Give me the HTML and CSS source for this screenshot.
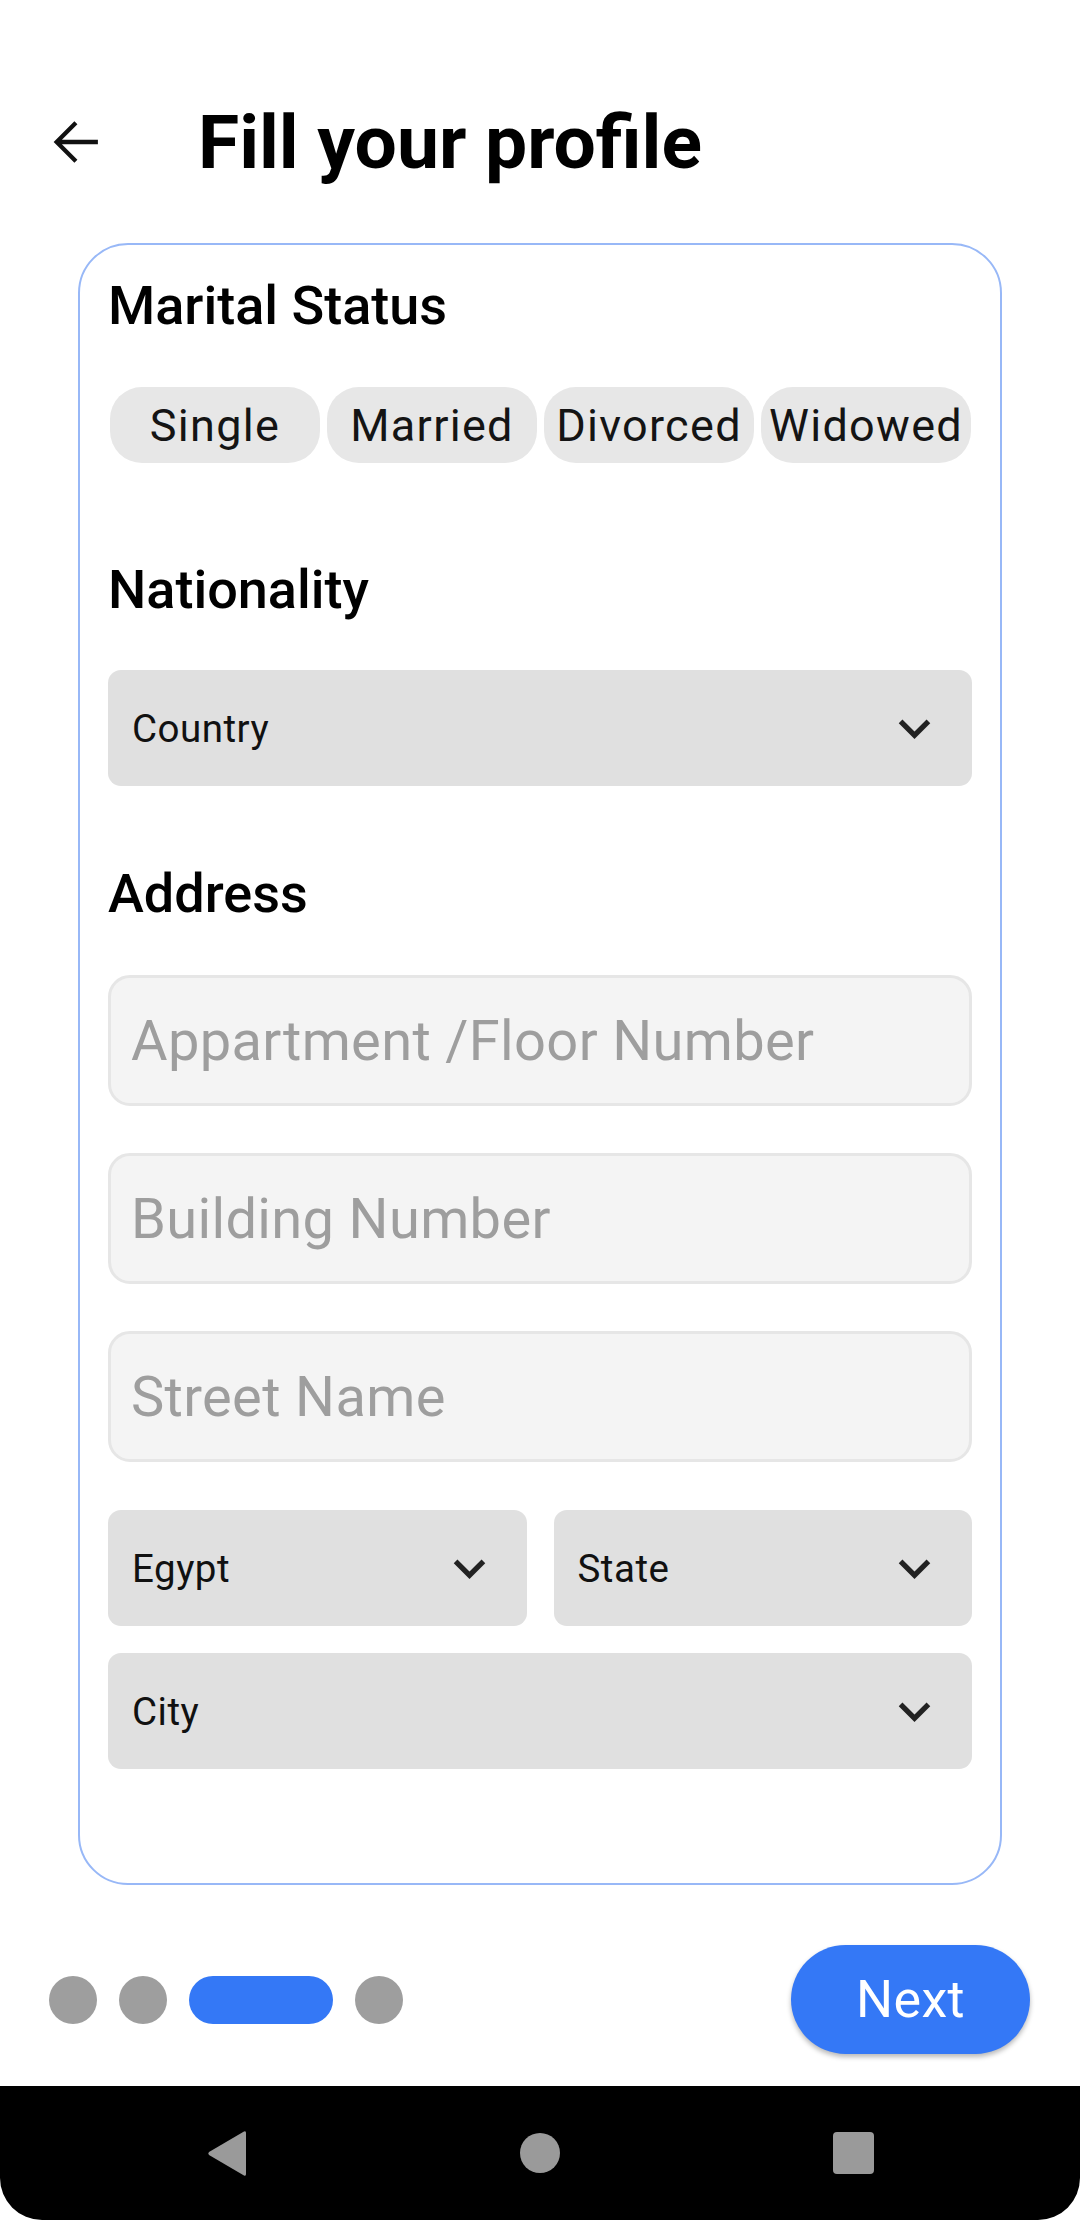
FILE: index.html
```html
<!DOCTYPE html>
<html lang="en">
<head>
<meta charset="utf-8">
<title>Fill your profile</title>
<link rel="stylesheet" href="styles.css">
</head>
<body>
<div class="screen">
  <header class="topbar">
    <span class="back" aria-label="Back">
      <svg viewBox="0 0 24 24" width="66" height="66"><path d="M19.6 12H4.6M11.6 5l-7 7 7 7" fill="none" stroke="#111" stroke-width="1.55" stroke-linecap="butt" stroke-linejoin="miter"/></svg>
    </span>
    <h1 class="title">Fill your profile</h1>
  </header>

  <main class="card">
    <h2 class="section-title">Marital Status</h2>
    <div class="chips">
      <span class="chip">Single</span>
      <span class="chip">Married</span>
      <span class="chip">Divorced</span>
      <span class="chip">Widowed</span>
    </div>

    <h2 class="section-title nat">Nationality</h2>
    <div class="select select-first">
      <span class="select-text">Country</span>
      <svg class="chev" viewBox="0 0 24 24" width="63" height="63"><path d="M16.59 8.59L12 13.17 7.41 8.59 6 10l6 6 6-6z" fill="#222"/></svg>
    </div>

    <h2 class="section-title addr">Address</h2>
    <div class="fields">
      <div class="field">Appartment /Floor Number</div>
      <div class="field">Building Number</div>
      <div class="field">Street Name</div>
    </div>

    <div class="select-row">
      <div class="select">
        <span class="select-text">Egypt</span>
        <svg class="chev" viewBox="0 0 24 24" width="63" height="63"><path d="M16.59 8.59L12 13.17 7.41 8.59 6 10l6 6 6-6z" fill="#222"/></svg>
      </div>
      <div class="select">
        <span class="select-text">State</span>
        <svg class="chev" viewBox="0 0 24 24" width="63" height="63"><path d="M16.59 8.59L12 13.17 7.41 8.59 6 10l6 6 6-6z" fill="#222"/></svg>
      </div>
    </div>
    <div class="select select-city">
      <span class="select-text">City</span>
      <svg class="chev" viewBox="0 0 24 24" width="63" height="63"><path d="M16.59 8.59L12 13.17 7.41 8.59 6 10l6 6 6-6z" fill="#222"/></svg>
    </div>
  </main>

  <footer class="pager">
    <div class="dots">
      <span class="dot"></span>
      <span class="dot"></span>
      <span class="dot dot-active"></span>
      <span class="dot"></span>
    </div>
    <span class="next">Next</span>
  </footer>

  <nav class="sysnav">
    <svg class="nav-back" viewBox="0 0 40 47" width="40" height="47"><path d="M37 1.5 Q39 0.5 39 3 V44 Q39 46.5 37 45.5 L2 25 Q0.5 23.5 2 22 Z" fill="#9a9a9a"/></svg>
    <span class="nav-home"></span>
    <span class="nav-recent"></span>
  </nav>
</div>
</body>
</html>
```

FILE: styles.css
```css
* { box-sizing: border-box; }

html, body {
  margin: 0;
  padding: 0;
  background: #ffffff;
}

body {
  font-family: Roboto, "Noto Sans", "Liberation Sans", sans-serif;
  color: #111111;
}

.screen {
  width: 1080px;
  height: 2220px;
  display: flex;
  flex-direction: column;
  overflow: hidden;
}

/* Top bar */
.topbar {
  display: flex;
  align-items: center;
  height: 78px;
  margin-top: 103px;
  padding-left: 44px;
}

.back {
  display: flex;
  width: 66px;
  height: 66px;
}

.title {
  margin: 0 0 0 88px;
  font-size: 75px;
  line-height: 78px;
  font-weight: 700;
  color: #000;
}

/* Card */
.card {
  margin: 62px 0 0 78px;
  width: 924px;
  height: 1642px;
  flex: none;
  border: 2px solid #98b8f7;
  border-radius: 50px;
  padding: 29px 28px 0 28px;
  display: flex;
  flex-direction: column;
}

.section-title {
  margin: 0;
  font-size: 54px;
  line-height: 64px;
  font-weight: 500;
  color: #000;
}

.section-title.nat { margin-top: 95px; }
.section-title.addr { margin-top: 76px; }

.chips {
  display: flex;
  gap: 7px;
  margin: 49px 0 0 2px;
}

.chip {
  width: 210px;
  height: 76px;
  border-radius: 32px;
  background: #e7e7e7;
  display: flex;
  align-items: center;
  justify-content: center;
  font-size: 45px;
  letter-spacing: 1.3px;
  color: #141414;
  white-space: nowrap;
}

/* Selects */
.select {
  height: 116px;
  background: #e0e0e0;
  border-radius: 13px;
  display: flex;
  align-items: center;
  justify-content: space-between;
  padding: 0 26px 0 24px;
}

.select-first { margin-top: 48px; }
.select-city { margin-top: 27px; }

.select-text {
  font-size: 38.5px;
  letter-spacing: 0.5px;
  color: #111;
}

.chev { display: block; flex: none; }

.select-row {
  margin-top: 48px;
  display: grid;
  grid-template-columns: 1fr 1fr;
  gap: 27px;
}

/* Text fields */
.fields {
  margin-top: 49px;
  display: flex;
  flex-direction: column;
  gap: 47px;
}

.field {
  height: 131px;
  border: 3px solid #e6e6e6;
  background: #f4f4f4;
  border-radius: 22px;
  display: flex;
  align-items: center;
  padding-left: 20px;
  font-size: 56px;
  letter-spacing: 0.35px;
  color: #9e9e9e;
  white-space: nowrap;
}

/* Pager */
.pager {
  margin-top: 60px;
  height: 109px;
  flex: none;
  display: flex;
  align-items: center;
  justify-content: space-between;
  padding: 0 50px 0 49px;
}

.dots {
  display: flex;
  gap: 22px;
}

.dot {
  width: 48px;
  height: 48px;
  border-radius: 24px;
  background: #9e9e9e;
}

.dot-active {
  width: 144px;
  background: #3478f6;
}

.next {
  width: 239px;
  height: 109px;
  border-radius: 55px;
  background: #3478f6;
  color: #fff;
  font-size: 52px;
  letter-spacing: 0.4px;
  display: flex;
  align-items: center;
  justify-content: center;
  box-shadow: 0 3px 5px rgba(0, 0, 0, 0.28);
}

/* System nav */
.sysnav {
  margin-top: 32px;
  height: 134px;
  flex: none;
  background: #000;
  border-radius: 0 0 42px 42px;
  display: flex;
  align-items: center;
  justify-content: center;
  gap: 273px;
}

.nav-back { display: block; }

.nav-home {
  width: 40px;
  height: 40px;
  border-radius: 50%;
  background: #9a9a9a;
}

.nav-recent {
  width: 41px;
  height: 42px;
  border-radius: 4px;
  background: #9a9a9a;
}
```
